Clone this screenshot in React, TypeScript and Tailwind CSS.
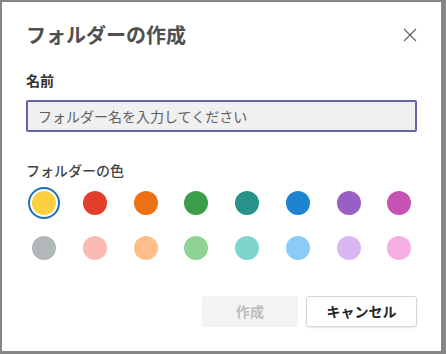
import { useState } from "react";

const COLORS = [
  "#fcd03e",
  "#e33e2b",
  "#ec7014",
  "#3c9d4a",
  "#26928a",
  "#1f84d0",
  "#9a5fc5",
  "#c653b3",
  "#b1b8b9",
  "#fbbbb2",
  "#fdc08b",
  "#8fd293",
  "#7ed5cd",
  "#8ccbf6",
  "#d7b6f3",
  "#f6afe5",
];

export default function App() {
  const [selected, setSelected] = useState(0);
  const [name, setName] = useState("");

  return (
    <div
      className="w-[446px] h-[354px] bg-[#858585] pt-[2px] pl-[2px] pr-[5px] pb-[3px]"
      style={{ fontFamily: '"Noto Sans CJK JP", "Noto Sans", sans-serif' }}
    >
      <div className="h-full bg-white px-6 pt-[19px] flex flex-col">
        {/* ヘッダー */}
        <div className="flex items-center justify-between h-7">
          <h1 className="text-[20px] leading-7 font-bold text-[#4f4f4f]">
            フォルダーの作成
          </h1>
          <button className="w-[16px] h-[16px] flex items-center justify-center mr-[-1px] text-[#616161]">
            <svg width="14" height="14" viewBox="0 0 14 14" fill="none">
              <path
                d="M1 1L13 13M13 1L1 13"
                stroke="currentColor"
                strokeWidth="1.1"
              />
            </svg>
          </button>
        </div>

        {/* 名前 */}
        <label className="mt-[21px] text-[14px] leading-5 font-bold text-[#333]">
          名前
        </label>
        <input
          value={name}
          onChange={(e) => setName(e.target.value)}
          placeholder="フォルダー名を入力してください"
          className="mt-[10px] h-[32px] w-full bg-[#f0f0f0] border-2 border-[#6264a7] rounded-[2px] px-[10px] text-[14px] text-[#252424] placeholder:text-[#5f5f5f] outline-none"
        />

        {/* 色 */}
        <div className="mt-[28px] text-[14px] leading-5 font-medium text-[#444]">
          フォルダーの色
        </div>
        <div className="mt-[5px] grid grid-cols-8 w-fit gap-x-[15px] gap-y-[9px]">
          {COLORS.map((c, i) => (
            <button
              key={c}
              onClick={() => setSelected(i)}
              className="w-9 h-9 flex items-center justify-center rounded-full"
            >
              <span
                className={`flex items-center justify-center rounded-full ${
                  selected === i
                    ? "w-[32px] h-[32px] border-2 border-[#1c6fb8]"
                    : "w-6 h-6"
                }`}
              >
                <span
                  className="block w-[24px] h-[24px] rounded-full"
                  style={{ backgroundColor: c }}
                />
              </span>
            </button>
          ))}
        </div>

        {/* ボタン */}
        <div className="mt-[30px] flex justify-end gap-2">
          <button
            disabled
            className="w-[96px] h-[31px] rounded-[3px] bg-[#f3f3f3] text-[14px] font-semibold text-[#bdbdbd]"
          >
            作成
          </button>
          <button className="w-[111px] h-[31px] rounded-[3px] bg-white border border-[#d6d6d6] shadow-[0_1px_2px_rgba(0,0,0,0.1)] text-[14px] font-bold text-[#252424]">
            キャンセル
          </button>
        </div>
      </div>
    </div>
  );
}
